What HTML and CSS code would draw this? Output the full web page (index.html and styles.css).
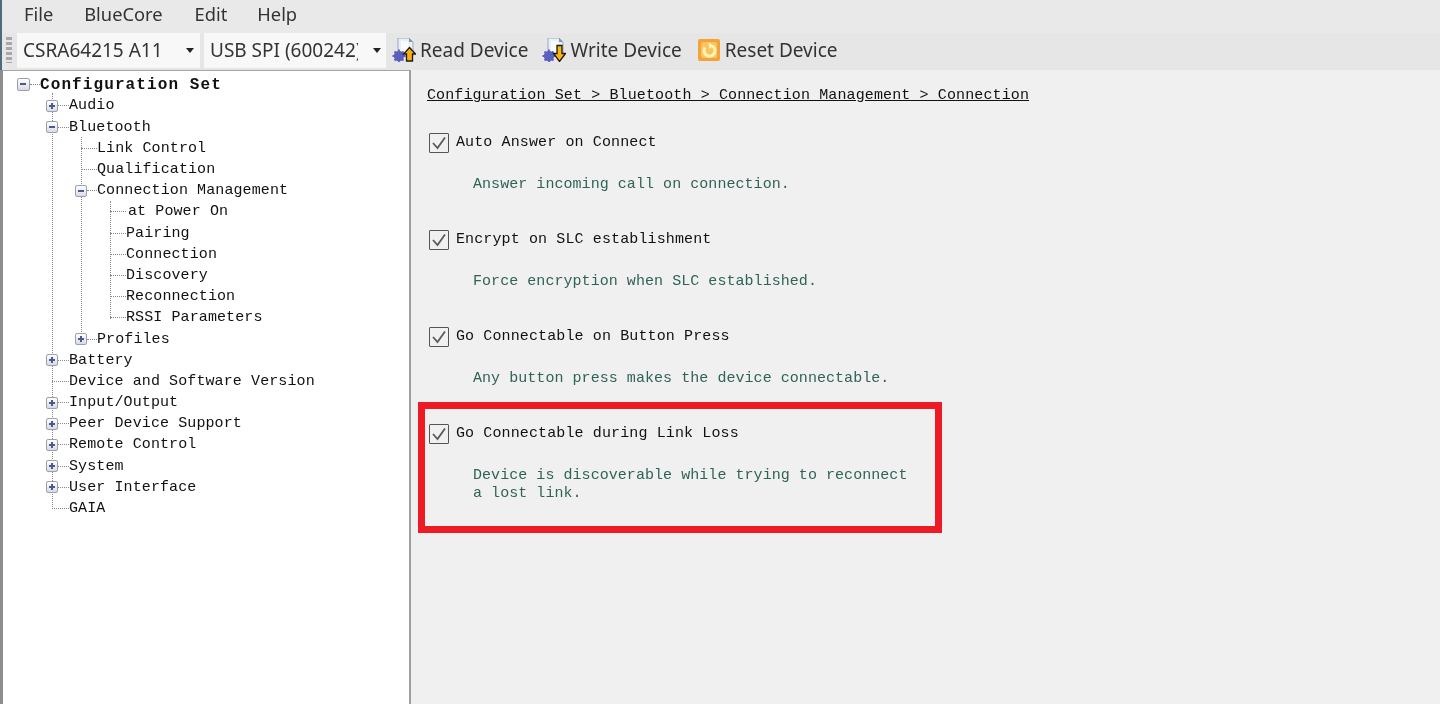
FILE: index.html
```html
<!DOCTYPE html>
<html lang="en">
<head>
<meta charset="utf-8">
<title>Configuration Set</title>
<link rel="stylesheet" href="styles.css">
</head>
<body>
<div class="app">
  <nav class="menubar">
    <span class="menu-item menu-file">File</span>
    <span class="menu-item menu-core">BlueCore</span>
    <span class="menu-item menu-edit">Edit</span>
    <span class="menu-item">Help</span>
  </nav>
  <div class="toolbar">
    <span class="grip"></span>
    <div class="combo combo-chip"><span class="combo-text">CSRA64215 A11</span><span class="caret"></span></div>
    <div class="combo combo-port"><span class="combo-text">USB SPI (600242)</span><span class="caret"></span></div>
    <div class="tool tool-read">
      <svg class="tool-icon" viewBox="0 0 24 24" width="24" height="24"><path d="M6 0h11l4 4v14H6z" fill="#eaf0f8" stroke="#9aa9c0"/><path d="M17 0v4h4z" fill="#8a94a8"/><path d="M9 3h7v12H9z" fill="#fafcff"/><circle cx="7" cy="18" r="5.200" fill="#5a5fc0"/><circle cx="7" cy="18" r="1.800" fill="#b9bcec"/><path d="M7 11.500v13M.5 18h13M2.500 13.500l9 9M11.500 13.500l-9 9" stroke="#5a5fc0" stroke-width="1.800"/><path d="M17.500 9.500l6 6.500h-3v7h-6v-7h-3z" fill="#f9ad14" stroke="#1c1a12" stroke-width="1.300"/></svg>
      <span>Read Device</span>
    </div>
    <div class="tool tool-write">
      <svg class="tool-icon" viewBox="0 0 24 24" width="24" height="24"><path d="M6 0h11l4 4v14H6z" fill="#eaf0f8" stroke="#9aa9c0"/><path d="M17 0v4h4z" fill="#8a94a8"/><path d="M9 3h7v12H9z" fill="#fafcff"/><circle cx="7" cy="18" r="5.200" fill="#5a5fc0"/><circle cx="7" cy="18" r="1.800" fill="#b9bcec"/><path d="M7 11.500v13M.5 18h13M2.500 13.500l9 9M11.500 13.500l-9 9" stroke="#5a5fc0" stroke-width="1.800"/><path d="M15 7.500h5v8h3.500l-6 8-6-8H15z" fill="#f9b414" stroke="#1c1a12" stroke-width="1.300"/></svg>
      <span>Write Device</span>
    </div>
    <div class="tool tool-reset">
      <svg class="tool-icon" viewBox="0 0 24 24" width="24" height="24"><rect x="1" y="1" width="22" height="22" rx="2" fill="#f4a23a"/><rect x="4" y="4" width="16" height="16" rx="2" fill="#fbc45e"/><path d="M15.500 8a5.500 5.500 0 1 1-7.500 1.500" fill="none" stroke="#fdf6b8" stroke-width="3"/><path d="M11.500 4.500l5 3-4 3.500z" fill="#fdf6b8"/></svg>
      <span>Reset Device</span>
    </div>
  </div>
  <div class="workspace">
    <aside class="tree">
      <span class="guide guide-1"></span>
      <span class="guide guide-2"></span>
      <span class="guide guide-3"></span>
      <div class="row level-0 root"><span class="box minus"></span><span class="twig"></span><span class="label">Configuration Set</span></div>
      <div class="row level-1"><span class="box plus"></span><span class="twig"></span><span class="label">Audio</span></div>
      <div class="row level-1"><span class="box minus"></span><span class="twig"></span><span class="label">Bluetooth</span></div>
      <div class="row level-2"><span class="box none"></span><span class="twig long"></span><span class="label">Link Control</span></div>
      <div class="row level-2"><span class="box none"></span><span class="twig long"></span><span class="label">Qualification</span></div>
      <div class="row level-2"><span class="box minus"></span><span class="twig"></span><span class="label">Connection Management</span></div>
      <div class="row level-3"><span class="box none"></span><span class="twig long"></span><span class="label label-power">at Power On</span></div>
      <div class="row level-3"><span class="box none"></span><span class="twig long"></span><span class="label">Pairing</span></div>
      <div class="row level-3"><span class="box none"></span><span class="twig long"></span><span class="label">Connection</span></div>
      <div class="row level-3"><span class="box none"></span><span class="twig long"></span><span class="label">Discovery</span></div>
      <div class="row level-3"><span class="box none"></span><span class="twig long"></span><span class="label">Reconnection</span></div>
      <div class="row level-3"><span class="box none"></span><span class="twig long"></span><span class="label">RSSI Parameters</span></div>
      <div class="row level-2"><span class="box plus"></span><span class="twig"></span><span class="label">Profiles</span></div>
      <div class="row level-1"><span class="box plus"></span><span class="twig"></span><span class="label">Battery</span></div>
      <div class="row level-1"><span class="box none"></span><span class="twig long"></span><span class="label">Device and Software Version</span></div>
      <div class="row level-1"><span class="box plus"></span><span class="twig"></span><span class="label">Input/Output</span></div>
      <div class="row level-1"><span class="box plus"></span><span class="twig"></span><span class="label">Peer Device Support</span></div>
      <div class="row level-1"><span class="box plus"></span><span class="twig"></span><span class="label">Remote Control</span></div>
      <div class="row level-1"><span class="box plus"></span><span class="twig"></span><span class="label">System</span></div>
      <div class="row level-1"><span class="box plus"></span><span class="twig"></span><span class="label">User Interface</span></div>
      <div class="row level-1"><span class="box none"></span><span class="twig long"></span><span class="label">GAIA</span></div>
    </aside>
    <main class="content">
      <h1 class="crumb">Configuration Set &gt; Bluetooth &gt; Connection Management &gt; Connection</h1>
      <section class="option">
        <div class="option-head"><span class="check"><svg viewBox="0 0 20 20" width="20" height="20"><path d="M4 10l4.500 5L16 4.500" fill="none" stroke="#5a5a5a" stroke-width="1.800"/></svg></span><span class="option-title">Auto Answer on Connect</span></div>
        <p class="option-desc">Answer incoming call on connection.</p>
      </section>
      <section class="option">
        <div class="option-head"><span class="check"><svg viewBox="0 0 20 20" width="20" height="20"><path d="M4 10l4.500 5L16 4.500" fill="none" stroke="#5a5a5a" stroke-width="1.800"/></svg></span><span class="option-title">Encrypt on SLC establishment</span></div>
        <p class="option-desc">Force encryption when SLC established.</p>
      </section>
      <section class="option">
        <div class="option-head"><span class="check"><svg viewBox="0 0 20 20" width="20" height="20"><path d="M4 10l4.500 5L16 4.500" fill="none" stroke="#5a5a5a" stroke-width="1.800"/></svg></span><span class="option-title">Go Connectable on Button Press</span></div>
        <p class="option-desc">Any button press makes the device connectable.</p>
      </section>
      <section class="option">
        <div class="option-head"><span class="check"><svg viewBox="0 0 20 20" width="20" height="20"><path d="M4 10l4.500 5L16 4.500" fill="none" stroke="#5a5a5a" stroke-width="1.800"/></svg></span><span class="option-title">Go Connectable during Link Loss</span></div>
        <p class="option-desc">Device is discoverable while trying to reconnect<br>a lost link.</p>
      </section>
      <div class="highlight"></div>
    </main>
  </div>
</div>
</body>
</html>
```
FILE: styles.css
```css
* { box-sizing: border-box; }
html, body { margin: 0; height: 100%; overflow: hidden; }
.app {
  width: 1440px;
  height: 704px;
  position: relative;
  display: flex;
  flex-direction: column;
  background: #f0f0f0;
  filter: blur(0.35px);
}
.app::before {
  content: "";
  position: absolute;
  left: 0;
  top: 0;
  width: 2px;
  height: 70px;
  background: #4f6a7a;
  z-index: 2;
}
.menubar {
  height: 33px;
  flex: none;
  display: flex;
  align-items: center;
  padding: 0 0 7px 24px;
  background: #e9e9e9;
  font: 18.3px "Noto Sans", sans-serif;
  color: #333;
}
.menu-file { margin-right: 31px; }
.menu-core { margin-right: 32px; }
.menu-edit { margin-right: 30px; }
.toolbar {
  height: 37px;
  flex: none;
  display: flex;
  align-items: flex-start;
  background: #e6e6e6;
  font: 19px "Noto Sans", sans-serif;
  color: #333;
}
.grip {
  width: 6px;
  height: 26px;
  margin: 4px 5px 0 6px;
  background: repeating-linear-gradient(#a8a8a8 0 3px, transparent 3px 5px);
}
.combo {
  height: 35px;
  background: #f8f8f8;
  display: flex;
  align-items: center;
  padding-left: 6px;
  position: relative;
  overflow: hidden;
}
.combo-chip { width: 183px; margin-right: 4px; }
.combo-port { width: 182px; margin-right: 6px; }
.combo-text { white-space: nowrap; display: block; width: 147.5px; overflow: hidden; line-height: 32px; padding-bottom: 2px; }
.caret {
  position: absolute;
  right: 6px;
  top: 15px;
  border: 4px solid transparent;
  border-top: 5px solid #222;
  border-bottom: 0;
}
.combo-port .caret { right: 5px; }
.tool { display: flex; align-items: center; gap: 4px; height: 35px; line-height: 32px; }
.tool span { padding-bottom: 1px; }
.tool-read { margin-right: 14px; }
.tool-write { margin-right: 15px; }
.tool-icon { flex: none; margin-bottom: 1px; }
.workspace {
  flex: 1;
  display: flex;
  min-height: 0;
  padding-left: 3px;
  background: #f0f0f0;
}
.workspace::before {
  content: "";
  position: absolute;
  left: 0;
  top: 70px;
  bottom: 0;
  width: 3px;
  background: #8d8d8d;
}
.tree {
  width: 408px;
  flex: none;
  background: #fff;
  border-top: 1px solid #a5a5a5;
  border-right: 2px solid #a0a0a0;
  position: relative;
  padding-top: 3.2px;
  font: 15px "Liberation Mono", monospace;
  letter-spacing: 0.1px;
  color: #111;
  overflow: hidden;
}
.row {
  height: 21.2px;
  display: flex;
  align-items: center;
  white-space: nowrap;
}
.level-0 { padding-left: 14px; }
.level-1 { padding-left: 43px; }
.level-2 { padding-left: 72px; }
.level-3 { padding-left: 101px; }
.root .label { font-size: 16px; font-weight: 700; letter-spacing: 1.1px; }
.label-power { margin-left: 2px; }
.box {
  width: 12px;
  height: 12px;
  flex: none;
  position: relative;
  z-index: 1;
}
.root .box { width: 13px; height: 13px; }
.plus, .minus {
  border: 1px solid #9aa0ac;
  border-radius: 2px;
  background: linear-gradient(#fff, #d8dbe4);
}
.plus::before, .minus::before {
  content: "";
  position: absolute;
  left: 2px;
  top: 4px;
  width: 6px;
  height: 2px;
  background: #4a5a90;
}
.plus::after {
  content: "";
  position: absolute;
  left: 4px;
  top: 2px;
  width: 2px;
  height: 6px;
  background: #4a5a90;
}
.none { width: 6px; background: transparent; }
.twig {
  width: 11px;
  flex: none;
  border-top: 1px dotted #888;
}
.twig.long { width: 17px; }
.level-0 .twig { width: 10px; }
.level-2 .twig { width: 10px; }
.level-2 .twig.long { width: 16px; }
.level-3 .twig.long { width: 16px; }
.label { display: block; }
.guide {
  position: absolute;
  width: 0;
  border-left: 1px dotted #888;
}
.guide-1 { left: 49px; top: 22px; height: 416px; }
.guide-2 { left: 78px; top: 66px; height: 205px; }
.guide-3 { left: 107px; top: 130px; height: 118px; }
.content {
  flex: 1;
  position: relative;
  padding: 18px 0 0 16px;
  font: 15px "Liberation Mono", monospace;
  letter-spacing: 0.12px;
  color: #111;
}
.crumb {
  margin: 0 0 25px;
  height: 20px;
  font: inherit;
  line-height: 16px;
  text-decoration: underline;
  white-space: nowrap;
}
.option { height: 97px; }
.option-head {
  display: flex;
  align-items: center;
  gap: 7px;
  height: 20px;
  padding-left: 2px;
}
.option-title { padding-bottom: 2px; }
.check {
  width: 20px;
  height: 20px;
  border: 1px solid #555;
  flex: none;
  display: flex;
  border-radius: 1px;
}
.check svg { flex: none; margin: -1px; }
.option-desc {
  margin: 23px 0 0 46px;
  line-height: 18px;
  letter-spacing: 0.05px;
  color: #2f6358;
}
.highlight {
  position: absolute;
  left: 7px;
  top: 332px;
  width: 524px;
  height: 131px;
  border: 7px solid #ed1c24;
}
```
